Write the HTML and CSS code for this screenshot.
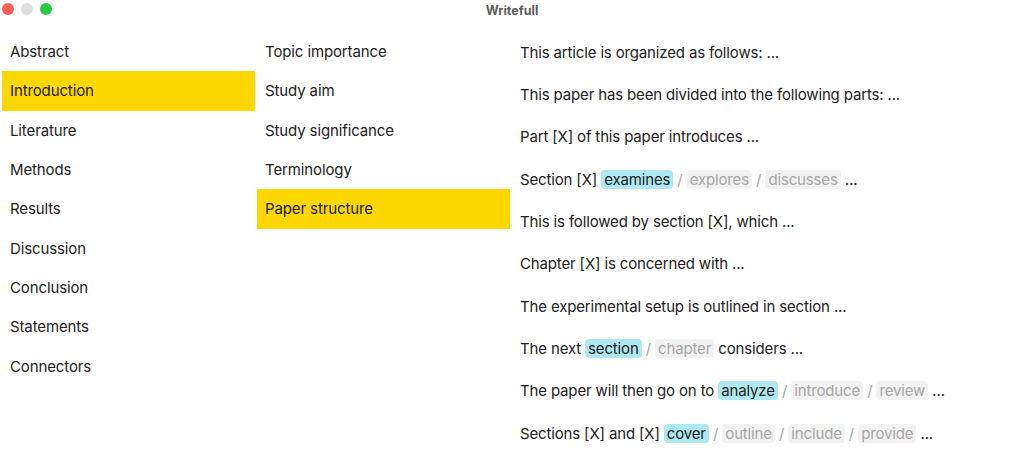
FILE: index.html
```html
<!DOCTYPE html>
<html>
<head>
<meta charset="utf-8">
<link rel="stylesheet" href="styles.css">
</head>
<body>
<div class="window">
  <div class="titlebar">
    <div class="lights">
      <span class="light red"></span>
      <span class="light grey"></span>
      <span class="light green"></span>
    </div>
    <div class="title">Writefull</div>
  </div>
  <div class="content">
    <ul class="list">
      <li>Abstract</li>
      <li class="active">Introduction</li>
      <li>Literature</li>
      <li>Methods</li>
      <li>Results</li>
      <li>Discussion</li>
      <li>Conclusion</li>
      <li>Statements</li>
      <li>Connectors</li>
    </ul>
    <ul class="list">
      <li>Topic importance</li>
      <li>Study aim</li>
      <li>Study significance</li>
      <li>Terminology</li>
      <li class="active">Paper structure</li>
    </ul>
    <ul class="phrases">
      <li><span class="line">This article is organized as follows: ...</span></li>
      <li><span class="line">This paper has been divided into the following parts: ...</span></li>
      <li><span class="line">Part [X] of this paper introduces ...</span></li>
      <li><span class="line">Section [X] <span class="chip on">examines</span> <span class="sep">/</span> <span class="chip">explores</span> <span class="sep">/</span> <span class="chip">discusses</span> ...</span></li>
      <li><span class="line">This is followed by section [X], which ...</span></li>
      <li><span class="line">Chapter [X] is concerned with ...</span></li>
      <li><span class="line">The experimental setup is outlined in section ...</span></li>
      <li><span class="line">The next <span class="chip on">section</span> <span class="sep">/</span> <span class="chip">chapter</span> considers ...</span></li>
      <li><span class="line">The paper will then go on to <span class="chip on">analyze</span> <span class="sep">/</span> <span class="chip">introduce</span> <span class="sep">/</span> <span class="chip">review</span> ...</span></li>
      <li><span class="line">Sections [X] and [X] <span class="chip on">cover</span> <span class="sep">/</span> <span class="chip">outline</span> <span class="sep">/</span> <span class="chip">include</span> <span class="sep">/</span> <span class="chip">provide</span> ...</span></li>
    </ul>
  </div>
</div>
</body>
</html>
```
FILE: styles.css
```css
* { box-sizing: border-box; }
html, body { margin: 0; padding: 0; background: #fff; }
body {
  font-family: Inter, "Noto Sans", sans-serif;
  color: #222;
  width: 1024px;
  height: 449px;
  overflow: hidden;
}
.titlebar {
  height: 20px;
  display: flex;
  align-items: center;
  justify-content: center;
  position: relative;
}
.lights {
  position: absolute;
  left: 2px;
  top: 3px;
  display: flex;
  gap: 7px;
}
.light {
  width: 12px;
  height: 12px;
  border-radius: 50%;
  display: block;
}
.red { background: #fe5f57; }
.grey { background: #dedede; }
.green { background: #28c840; }
.title {
  font-size: 12.5px;
  font-weight: 700;
  color: #5c5c5c;
}
.content {
  display: grid;
  grid-template-columns: 253px 253px 1fr;
  column-gap: 2px;
  padding: 12px 0 0 2px;
}
ul { list-style: none; margin: 0; padding: 0; }
.list li {
  height: 39.33px;
  display: flex;
  align-items: center;
  padding-left: 8px;
  font-size: 15px;
  letter-spacing: -0.12px;
}
.list li.active { background: #fdd800; }
.phrases { margin-top: -1px; }
.phrases li {
  height: 42.33px;
  display: flex;
  align-items: center;
  padding-left: 8px;
  font-size: 15px;
  letter-spacing: -0.15px;
}
.line { white-space: nowrap; }
.chip {
  display: inline-block;
  background: #f2f2f2;
  color: #a6a6a6;
  border-radius: 4px;
  padding: 0 3px;
  line-height: 19px;
}
.chip.on { background: #aee8f0; color: #222; }
.sep { color: #a6a6a6; }
```
